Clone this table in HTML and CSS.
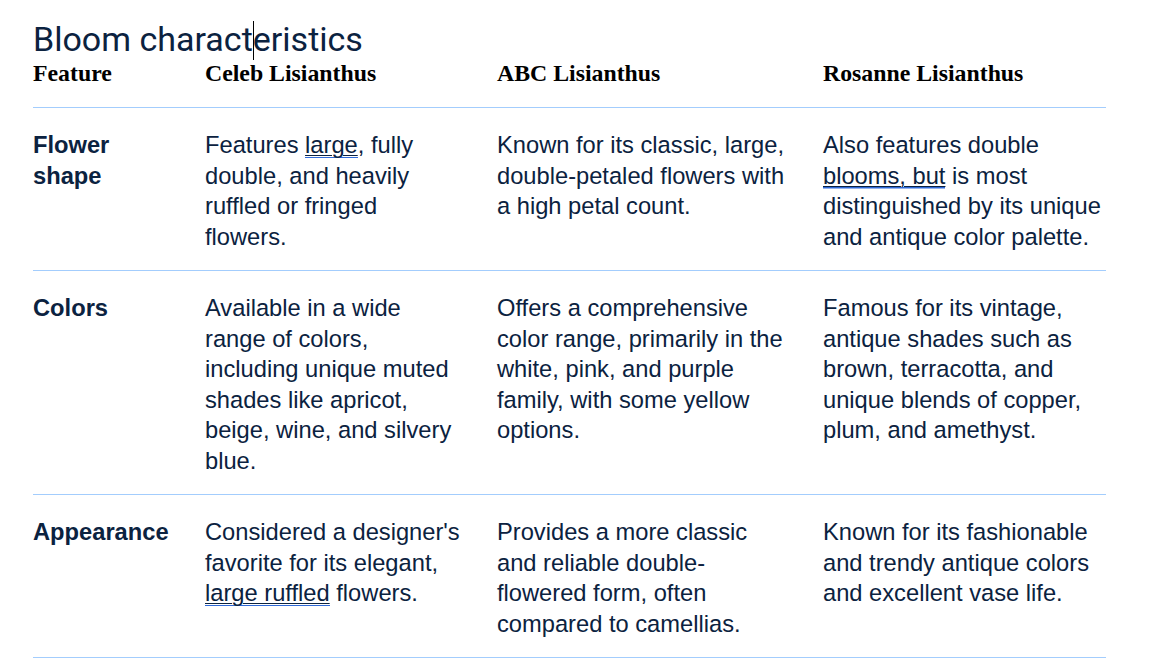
FILE: index.html
```html
<!DOCTYPE html>
<html lang="en">
<head>
<meta charset="utf-8">
<title>Bloom characteristics</title>
<link rel="stylesheet" href="styles.css">
</head>
<body>
<div class="page">
  <h1 class="title">Bloom charact<span class="caret"></span>eristics</h1>
  <div class="table">
    <div class="row head">
      <div class="cell">Feature</div>
      <div class="cell">Celeb Lisianthus</div>
      <div class="cell">ABC Lisianthus</div>
      <div class="cell">Rosanne Lisianthus</div>
    </div>
    <div class="row">
      <div class="cell feat">Flower shape</div>
      <div class="cell">Features <span class="mark">large</span>, fully double, and heavily ruffled or fringed flowers.</div>
      <div class="cell">Known for its classic, large, double-petaled flowers with a high petal count.</div>
      <div class="cell">Also features double <span class="mark">blooms, but</span> is most distinguished by its unique and antique color palette.</div>
    </div>
    <div class="row">
      <div class="cell feat">Colors</div>
      <div class="cell">Available in a wide range of colors, including unique muted shades like apricot, beige, wine, and silvery blue.</div>
      <div class="cell">Offers a comprehensive color range, primarily in the white, pink, and purple family, with some yellow options.</div>
      <div class="cell">Famous for its vintage, antique shades such as brown, terracotta, and unique blends of copper, plum, and amethyst.</div>
    </div>
    <div class="row">
      <div class="cell feat">Appearance</div>
      <div class="cell">Considered a designer's favorite for its elegant, <span class="mark">large ruffled</span> flowers.</div>
      <div class="cell">Provides a more classic and reliable double-flowered form, often compared to camellias.</div>
      <div class="cell">Known for its fashionable and trendy antique colors and excellent vase life.</div>
    </div>
  </div>
</div>
</body>
</html>
```
FILE: styles.css
```css
html, body {
  margin: 0;
  padding: 0;
  background: #ffffff;
}

.page {
  padding: 19px 0 0 33px;
  width: 1073px;
  color: #0b2240;
}

.title {
  margin: 0;
  font-family: Roboto, "Liberation Sans", sans-serif;
  font-weight: 400;
  font-size: 34px;
  line-height: 40px;
  color: #0b2240;
}

.caret {
  display: inline-block;
  width: 1px;
  height: 39px;
  background: #000000;
  vertical-align: -9px;
  margin-right: -1px;
}

.row {
  display: grid;
  grid-template-columns: 172px 292px 326px 283px;
  padding: 22px 0 18px;
  border-bottom: 1px solid #a3cdfd;
  font-family: "Liberation Sans", Arial, sans-serif;
  font-size: 23.7px;
  line-height: 30.5px;
}

.cell:nth-child(1) {
  padding-right: 24px;
}

.cell:nth-child(2) {
  padding-right: 34px;
}

.cell:nth-child(3) {
  padding-right: 36px;
}

.row.head {
  padding: 0 0 21px;
  font-family: "Liberation Serif", "Times New Roman", serif;
  font-weight: 700;
  font-size: 23.8px;
  line-height: 26px;
  color: #000000;
}

.row.head .cell {
  padding-right: 0;
}

.feat {
  font-weight: 700;
}

.mark {
  text-decoration: underline;
  text-decoration-thickness: 1px;
  text-underline-offset: 2px;
  background-image: linear-gradient(#2f6ad8, #2f6ad8);
  background-repeat: no-repeat;
  background-size: 100% 1.5px;
  background-position: 0 100%;
}
```
